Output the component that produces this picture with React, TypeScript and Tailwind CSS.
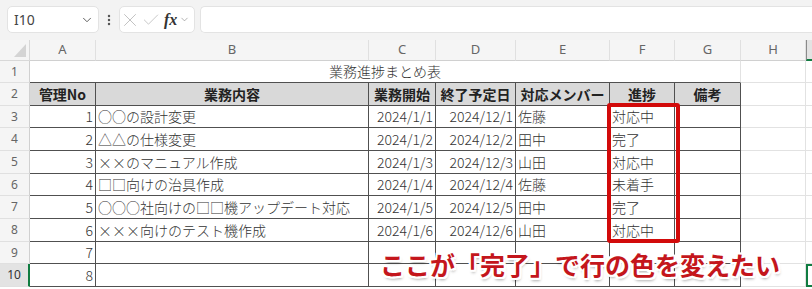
import React from 'react';
import { ChevronDown, X, Check, EllipsisVertical } from 'lucide-react';

const COLS = ['A', 'B', 'C', 'D', 'E', 'F', 'G', 'H', ''];
const CW = ['w-[66px]', 'w-[273px]', 'w-[67px]', 'w-[80px]', 'w-[94px]', 'w-[65px]', 'w-[66px]', 'w-[65px]', 'w-[80px]'];
const RH = ['h-[22px]', 'h-[23px]', 'h-[22px]', 'h-[23px]', 'h-[23px]', 'h-[22px]', 'h-[23px]', 'h-[23px]', 'h-[22px]', 'h-[23px]', 'h-[23px]'];

const HEAD = ['管理No', '業務内容', '業務開始', '終了予定日', '対応メンバー', '進捗', '備考'];
const DATA: string[][] = [
  ['1', '○○の設計変更', '2024/1/1', '2024/12/1', '佐藤', '対応中', ''],
  ['2', '△△の仕様変更', '2024/1/2', '2024/12/2', '田中', '完了', ''],
  ['3', '××のマニュアル作成', '2024/1/3', '2024/12/3', '山田', '対応中', ''],
  ['4', '□□向けの治具作成', '2024/1/4', '2024/12/4', '佐藤', '未着手', ''],
  ['5', '○○○社向けの□□機アップデート対応', '2024/1/5', '2024/12/5', '田中', '完了', ''],
  ['6', '×××向けのテスト機作成', '2024/1/6', '2024/12/6', '山田', '対応中', ''],
  ['7', '', '', '', '', '', ''],
  ['8', '', '', '', '', '', ''],
];
const ALIGN = ['justify-end', 'justify-start', 'justify-end', 'justify-end', 'justify-start', 'justify-start', 'justify-start'];

function RowHeader({ n, h, selected }: { n: number; h: string; selected?: boolean }) {
  return (
    <div
      className={`${h} w-[30px] shrink-0 flex items-center justify-center text-[12px] font-['Noto_Sans',sans-serif] border-b border-b-[#e0e0e0] ${
        selected
          ? 'bg-[#e3e3e3] border-r-2 border-r-[#107c41] text-[#333]'
          : 'bg-[#f5f5f5] border-r border-r-[#d0d0d0] text-[#666]'
      }`}
    >
      {n}
    </div>
  );
}

function GridCells({ h, from, selectedI }: { h: string; from: number; selectedI?: boolean }) {
  return (
    <>
      {CW.slice(from).map((w, i) => {
        const idx = from + i;
        if (idx === 8 && selectedI) {
          return <div key={idx} className={`${h} ${w} shrink-0 bg-white border-2 border-[#107c41]`} />;
        }
        return <div key={idx} className={`${h} ${w} shrink-0 bg-white border-r border-b border-[#e2e2e2]`} />;
      })}
    </>
  );
}

export default function App() {
  return (
    <div className="relative w-[812px] h-[289px] overflow-hidden bg-white font-['Noto_Sans_CJK_JP','Noto_Sans',sans-serif]">
      {/* Formula bar */}
      <div className="h-[40px] bg-[#f3f3f3] flex items-start pt-[6px] pl-[7px] gap-0">
        <div className="w-[92px] h-[27px] bg-white rounded-[5px] border border-[#e3e3e3] flex items-center justify-between pl-[6px] pr-[4px]">
          <span className="text-[14px] text-[#444] font-['Noto_Sans',sans-serif]">I10</span>
          <ChevronDown size={14} strokeWidth={1.6} className="text-[#555]" />
        </div>
        <div className="w-[20px] h-[27px] flex items-center justify-center">
          <EllipsisVertical size={14} strokeWidth={2.2} className="text-[#555]" />
        </div>
        <div className="w-[76px] h-[27px] bg-white rounded-[5px] border border-[#e3e3e3] flex items-center pl-[-2px]">
          <X size={22} strokeWidth={0.9} className="text-[#b5b5b5] -ml-[1px]" />
          <Check size={20} strokeWidth={0.9} className="text-[#b5b5b5] ml-[0px]" />
          <span className="ml-[3px] text-[16px] italic font-bold text-[#333] font-['Liberation_Serif',serif] leading-none">fx</span>
          <ChevronDown size={11} strokeWidth={1.4} className="text-[#888] ml-[2px]" />
        </div>
        <div className="ml-[5px] flex-1 h-[27px] bg-white rounded-l-[5px] border border-r-0 border-[#e3e3e3]" />
      </div>

      {/* Column headers */}
      <div className="flex h-[21px] bg-[#f5f5f5]">
        <div className="w-[30px] h-[21px] shrink-0 relative border-r border-b border-[#d8d8d8]">
          <svg width="12" height="13" viewBox="0 0 12 13" className="absolute right-[3px] bottom-[3px]">
            <polygon points="12,0 12,13 0,13" fill="#d4d4d4" />
          </svg>
        </div>
        {COLS.map((c, i) => (
          <div
            key={i}
            className={`${CW[i]} h-[21px] shrink-0 flex items-center justify-center text-[13px] font-['Noto_Sans',sans-serif] ${
              i === 8
                ? 'bg-[#e3e3e3] border-l border-l-[#8a8a8a] border-b-2 border-b-[#107c41] text-[#333]'
                : 'border-r border-r-[#e0e0e0] border-b border-b-[#d0d0d0] text-[#666]'
            }`}
          >
            {c}
          </div>
        ))}
      </div>

      {/* Row 1 */}
      <div className="flex">
        <RowHeader n={1} h={RH[0]} />
        <div className="h-[22px] w-[711px] shrink-0 flex items-center justify-center text-[14px] font-light text-[#333] border-r border-r-[#e2e2e2] border-b border-b-[#505050]">
          業務進捗まとめ表
        </div>
        <GridCells h={RH[0]} from={7} />
      </div>

      {/* Row 2 header */}
      <div className="flex">
        <RowHeader n={2} h={RH[1]} />
        {HEAD.map((t, i) => (
          <div
            key={i}
            className={`${RH[1]} ${CW[i]} shrink-0 flex items-center justify-center bg-[#d9d9d9] text-[14px] font-bold text-[#222] border-r border-b border-[#505050]`}
          >
            {t}
          </div>
        ))}
        <GridCells h={RH[1]} from={7} />
      </div>

      {/* Data rows */}
      {DATA.map((row, r) => {
        const h = RH[r + 2];
        const rowNum = r + 3;
        return (
          <div key={r} className="flex">
            <RowHeader n={rowNum} h={h} selected={rowNum === 10} />
            {row.map((t, i) => (
              <div
                key={i}
                className={`${h} ${CW[i]} shrink-0 flex items-center ${ALIGN[i]} px-[2px] bg-white text-[14px] font-light text-[#333] whitespace-nowrap overflow-visible border-r border-b border-[#505050]`}
              >
                {t}
              </div>
            ))}
            <GridCells h={h} from={7} selectedI={rowNum === 10} />
          </div>
        );
      })}

      {/* Red highlight box */}
      <div className="absolute left-[607px] top-[103px] w-[73px] h-[140px] border-4 border-[#d20a0a] rounded-[3px]" />

      {/* Annotation */}
      <div className="absolute left-[380px] top-[252px] text-[25px] leading-none font-bold text-[#c4161c] whitespace-nowrap [text-shadow:2px_0_#fff,-2px_0_#fff,0_2px_#fff,0_-2px_#fff,2px_2px_#fff,-2px_-2px_#fff,2px_-2px_#fff,-2px_2px_#fff,1px_3px_3px_rgba(0,0,0,0.35)]">
        ここが「完了」で行の色を変えたい
      </div>
    </div>
  );
}
